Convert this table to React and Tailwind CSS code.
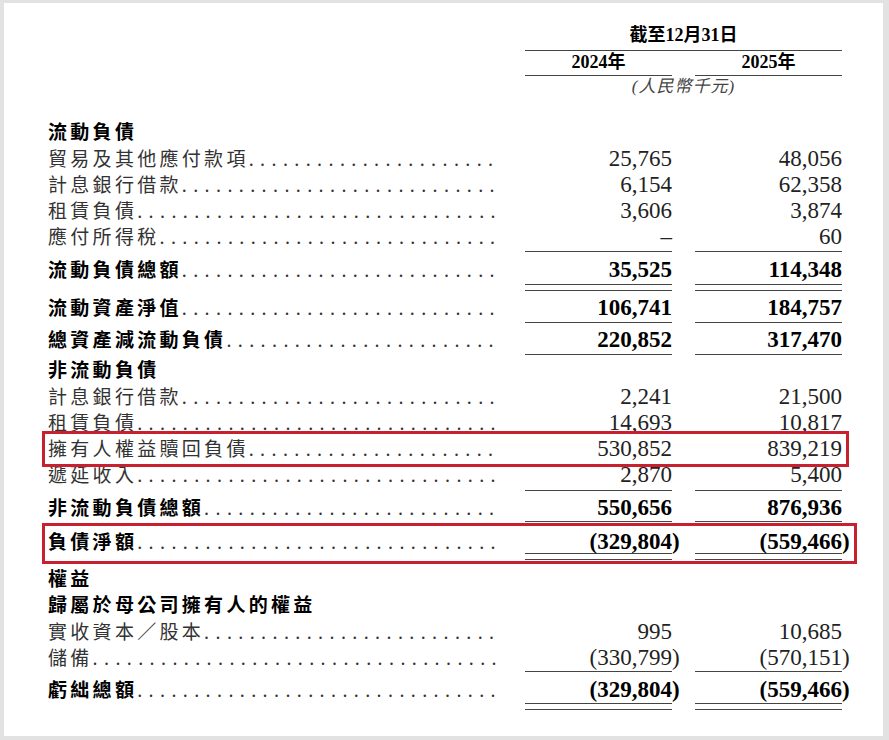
import React from 'react';

const COLS = 'grid grid-cols-[477px_147px_23px_147px]';
const CJK = "font-['Noto_Sans_CJK_TC','Noto_Sans_CJK_SC',sans-serif]";
const SERIF = "font-['Liberation_Serif','Noto_Sans_CJK_TC',serif]";

const ROWS = [
  { label: '流動負債', head: true },
  { label: '貿易及其他應付款項', a: '25,765', b: '48,056' },
  { label: '計息銀行借款', a: '6,154', b: '62,358' },
  { label: '租賃負債', a: '3,606', b: '3,874' },
  { label: '應付所得稅', a: '–', b: '60' },
  { rule: 'h-[7px] pt-[3px]' },
  { label: '流動負債總額', a: '35,525', b: '114,348', bold: true },
  { rule: 'h-[12px] pt-[3px]', double: true },
  { label: '流動資產淨值', a: '106,741', b: '184,757', bold: true },
  { rule: 'h-[6px] pt-[3px]' },
  { label: '總資產減流動負債', a: '220,852', b: '317,470', bold: true },
  { rule: 'h-[5px] pt-[3px]' },
  { label: '非流動負債', head: true },
  { label: '計息銀行借款', a: '2,241', b: '21,500' },
  { label: '租賃負債', a: '14,693', b: '10,817' },
  { label: '擁有人權益贖回負債', a: '530,852', b: '839,219', box: 1 },
  { label: '遞延收入', a: '2,870', b: '5,400' },
  { rule: 'h-[7px] pt-[4px]' },
  { label: '非流動負債總額', a: '550,656', b: '876,936', bold: true },
  { rule: 'h-[8px] pt-[2px]' },
  { label: '負債淨額', a: '(329,804)', b: '(559,466)', bold: true, box: 2 },
  { rule: 'h-[12px] pt-0', double: true },
  { label: '權益', head: true },
  { label: '歸屬於母公司擁有人的權益', head: true },
  { label: '實收資本／股本', a: '995', b: '10,685' },
  { label: '儲備', a: '(330,799)', b: '(570,151)' },
  { rule: 'h-[6px] pt-[2px]' },
  { label: '虧絀總額', a: '(329,804)', b: '(559,466)', bold: true },
  { rule: 'h-[12px] pt-[2px]', double: true },
];

function Num({ v, bold }) {
  if (v == null) return <div />;
  const neg = v.endsWith(')');
  const body = neg ? v.slice(0, -1) : v;
  return (
    <div
      className={`text-right ${SERIF} text-[23px] leading-[26px] ${
        bold ? 'font-bold text-black' : 'text-[#222]'
      }`}
    >
      {body}
      {neg && <span className="inline-block w-0 text-left">)</span>}
    </div>
  );
}

function Rule({ cls, double }) {
  const line = (
    <div className={cls}>
      <div className="border-t border-[#444]" />
      {double && <div className="mt-[5px] border-t border-[#444]" />}
    </div>
  );
  return (
    <div className={COLS}>
      <div />
      {line}
      <div />
      {line}
    </div>
  );
}

function Row({ label, a, b, bold, head, box }) {
  const strong = bold || head;
  return (
    <div className={`relative ${COLS} h-[26px] items-center`}>
      <div className="flex items-baseline min-w-0 pr-[28px]">
        <span
          className={`${CJK} text-[19px] leading-[26px] tracking-[3.3px] whitespace-nowrap ${
            strong ? 'font-bold text-black' : 'text-[#333]'
          }`}
        >
          {label}
        </span>
        {!head && (
          <span className="flex-1 overflow-hidden whitespace-nowrap font-['Liberation_Serif',serif] text-[20px] tracking-[6.4px] text-[#333]">
            {'.'.repeat(60)}
          </span>
        )}
      </div>
      <Num v={a} bold={bold} />
      <div />
      <Num v={b} bold={bold} />
      {/* red highlight boxes sit over the row */}
      {box === 1 && (
        <div className="pointer-events-none absolute z-10 -left-[6px] right-[34px] -top-[3px] -bottom-[7px] border-[3px] border-[#c9202f]" />
      )}
      {box === 2 && (
        <div className="pointer-events-none absolute z-10 -left-[6px] right-[26px] -top-[4px] -bottom-[11px] border-[3px] border-[#c9202f]" />
      )}
    </div>
  );
}

export default function App() {
  return (
    <div className="w-[889px] h-[740px] bg-[#e2e2e2] pt-[3px] pl-[4px] pr-[6px] pb-[4px]">
      <div className="h-full bg-white pl-[44px] pt-[19px]">
        {/* column header */}
        <div className={COLS}>
          <div />
          <div
            className={`col-span-3 h-[29px] border-b border-[#444] text-center ${SERIF} font-bold text-[18px] leading-[27px] text-black`}
          >
            截至12月31日
          </div>
        </div>
        <div className={COLS}>
          <div />
          <div className={`h-[25px] border-b border-[#444] text-center ${SERIF} font-bold text-[18px] leading-[22px] text-black`}>
            2024年
          </div>
          <div />
          <div className={`h-[25px] border-b border-[#444] text-center ${SERIF} font-bold text-[18px] leading-[22px] text-black`}>
            2025年
          </div>
        </div>
        <div className={COLS}>
          <div />
          <div className={`col-span-3 h-[22px] text-center ${SERIF} italic text-[17px] leading-[22px] text-[#444] tracking-[1px]`}>
            (人民幣千元)
          </div>
        </div>
        <div className="h-[20px]" />

        {ROWS.map((r, i) =>
          r.rule ? <Rule key={i} cls={r.rule} double={r.double} /> : <Row key={i} {...r} />
        )}
      </div>
    </div>
  );
}
